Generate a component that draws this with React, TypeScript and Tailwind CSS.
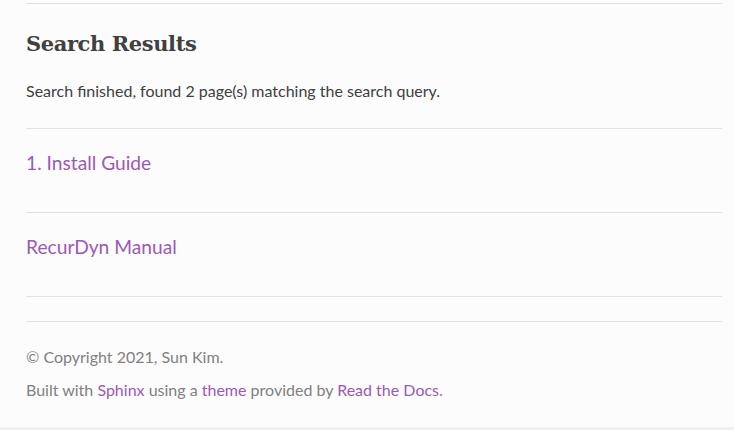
import React from 'react';

const results = [
  { title: '1. Install Guide', href: '#install' },
  { title: 'RecurDyn Manual', href: '#manual' },
];

export default function App() {
  return (
    <div className="min-h-screen bg-[#efefef] font-['Lato','Noto_Sans',sans-serif] text-[#404040]">
      <div className="h-[427px] bg-[#fcfcfc] pl-[26px] pr-[12px] pt-[3px]">
        {/* breadcrumbs rule */}
        <div className="border-t border-[#e1e4e5]" />

        <h1 className="mt-[22px] h-[36px] font-['DejaVu_Serif',serif] text-[21px] font-bold leading-[36px] tracking-[-0.4px] text-[#404040]">
          Search Results
        </h1>

        <p className="mt-[17px] h-[24px] text-[16px] leading-[24px]">
          Search finished, found 2 page(s) matching the search query.
        </p>

        <ul className="mt-[25px] border-t border-[#e1e4e5]">
          {results.map((r) => (
            <li key={r.href} className="h-[84px] border-b border-[#e1e4e5] pt-[22px]">
              <a href={r.href} className="text-[19.2px] leading-[24px] text-[#9b59b6]">
                {r.title}
              </a>
            </li>
          ))}
        </ul>

        <footer className="mt-[24px] border-t border-[#e1e4e5] pt-[23px] text-[16px] leading-[24px] text-[#808080]">
          <p>© Copyright 2021, Sun Kim.</p>
          <p className="mt-[9px]">
            Built with <a href="#sphinx" className="text-[#9b59b6]">Sphinx</a> using a{' '}
            <a href="#theme" className="text-[#9b59b6]">theme</a> provided by{' '}
            <a href="#rtd" className="text-[#9b59b6]">Read the Docs</a>.
          </p>
        </footer>
      </div>
    </div>
  );
}
